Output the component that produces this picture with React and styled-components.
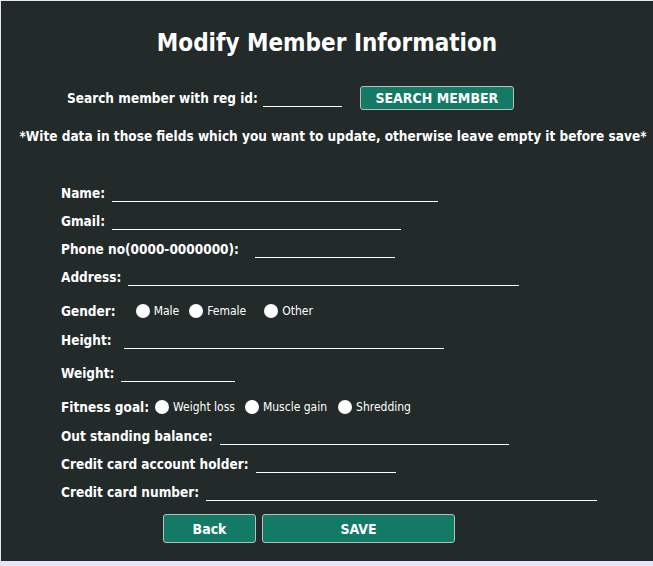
import React from "react";
import styled, { createGlobalStyle } from "styled-components";

const GlobalStyle = createGlobalStyle`
	html, body {
		margin: 0;
		padding: 0;
		background: #e6e6f8;
	}
	body {
		padding: 1px 0 0 1px;
		font-family: "DejaVu Sans Condensed", "DejaVu Sans", sans-serif;
		font-stretch: semi-condensed;
		color: #fff;
	}
`;

const textFields = {
	name: { label: "Name:", width: 326 },
	gmail: { label: "Gmail:", width: 289 },
	phone: { label: "Phone no(0000-0000000):", width: 140, gap: 16 },
	address: { label: "Address:", width: 391 },
};

const ModifyMember = () => {
	const handleSubmit = (e) => {
		e.preventDefault();
	};

	return (
		<Panel>
			<Title>Modify Member Information</Title>
			<SearchRow>
				<Label>Search member with reg id:</Label>
				<Field $width={79} $gap={5} type="text" />
				<SearchButton type="button">SEARCH MEMBER</SearchButton>
			</SearchRow>
			<Note>
				*Wite data in those fields which you want to update, otherwise leave
				empty it before save*
			</Note>
			<Form onSubmit={handleSubmit}>
				{Object.keys(textFields).map((key) => (
					<Row key={key}>
						<Label>{textFields[key].label}</Label>
						<Field
							$width={textFields[key].width}
							$gap={textFields[key].gap}
							type="text"
						/>
					</Row>
				))}
				<Row $top={6}>
					<Label>Gender:</Label>
					<Options $first={20}>
						<Option>
							<Radio type="radio" name="gender" />
							Male
						</Option>
						<Option $before={10}>
							<Radio type="radio" name="gender" />
							Female
						</Option>
						<Option $before={18}>
							<Radio type="radio" name="gender" />
							Other
						</Option>
					</Options>
				</Row>
				<Row $top={1}>
					<Label>Height:</Label>
					<Field $width={320} $gap={12} type="text" />
				</Row>
				<Row $top={5}>
					<Label>Weight:</Label>
					<Field $width={114} type="text" />
				</Row>
				<Row $top={6}>
					<Label>Fitness goal:</Label>
					<Options $first={6}>
						<Option>
							<Radio type="radio" name="goal" />
							Weight loss
						</Option>
						<Option $before={10}>
							<Radio type="radio" name="goal" />
							Muscle gain
						</Option>
						<Option $before={11}>
							<Radio type="radio" name="goal" />
							Shredding
						</Option>
					</Options>
				</Row>
				<Row $top={1}>
					<Label>Out standing balance:</Label>
					<Field $width={289} type="text" />
				</Row>
				<Row>
					<Label>Credit card account holder:</Label>
					<Field $width={140} type="text" />
				</Row>
				<Row>
					<Label>Credit card number:</Label>
					<Field $width={391} type="text" />
				</Row>
				<Actions>
					<ActionButton type="button" $width={93}>
						Back
					</ActionButton>
					<ActionButton type="submit" $width={193}>
						SAVE
					</ActionButton>
				</Actions>
			</Form>
		</Panel>
	);
};

export default function App() {
	return (
		<>
			<GlobalStyle />
			<ModifyMember />
		</>
	);
}

const Panel = styled.div`
	width: 652px;
	height: 560px;
	box-sizing: border-box;
	background: #232a2a;
	padding-top: 27px;
`;

const Title = styled.h1`
	margin: 0;
	text-align: center;
	font-size: 24px;
	line-height: 30px;
	font-weight: bold;
`;

const SearchRow = styled.div`
	display: flex;
	align-items: center;
	height: 24px;
	margin-top: 28px;
	padding-left: 66px;
`;

const Label = styled.span`
	font-size: 13.5px;
	font-weight: bold;
	white-space: nowrap;
`;

const Field = styled.input`
	width: ${(p) => p.$width}px;
	height: 17px;
	box-sizing: border-box;
	margin: 0 0 0 ${(p) => p.$gap || 7}px;
	padding: 0 2px;
	background: transparent;
	border: none;
	border-bottom: 1px solid #fff;
	color: #fff;
	font: inherit;
	font-size: 13px;
	outline: none;
`;

const SearchButton = styled.button`
	height: 24px;
	width: 154px;
	margin-left: 18px;
	padding: 0;
	background: #137a66;
	border: 1px solid #b9bdbb;
	border-radius: 3px;
	color: #fff;
	font-family: inherit;
	font-stretch: inherit;
	font-size: 14px;
	font-weight: bold;
`;

const Note = styled.p`
	margin: 16px 0 0;
	padding-left: 12px;
	text-align: center;
	font-size: 13.5px;
	line-height: 20px;
	font-weight: bold;
	white-space: nowrap;
`;

const Form = styled.form`
	margin-top: 33px;
	padding-left: 60px;
`;

const Row = styled.div`
	display: flex;
	align-items: center;
	height: 28px;
	margin-top: ${(p) => p.$top || 0}px;
`;

const Options = styled.div`
	display: flex;
	align-items: center;
	margin-left: ${(p) => p.$first}px;
`;

const Option = styled.label`
	display: flex;
	align-items: center;
	gap: 4px;
	margin-left: ${(p) => p.$before || 0}px;
	font-size: 12px;
`;

const Radio = styled.input`
	appearance: none;
	width: 14px;
	height: 14px;
	margin: 0;
	border-radius: 50%;
	background: #fff;
`;

const Actions = styled.div`
	display: flex;
	gap: 6px;
	margin-top: 8px;
	padding-left: 102px;
`;

const ActionButton = styled.button`
	width: ${(p) => p.$width}px;
	height: 29px;
	padding: 0;
	background: #137a66;
	border: 1px solid #b9bdbb;
	border-radius: 3px;
	color: #fff;
	font-family: inherit;
	font-stretch: inherit;
	font-size: 14px;
	font-weight: bold;
`;
